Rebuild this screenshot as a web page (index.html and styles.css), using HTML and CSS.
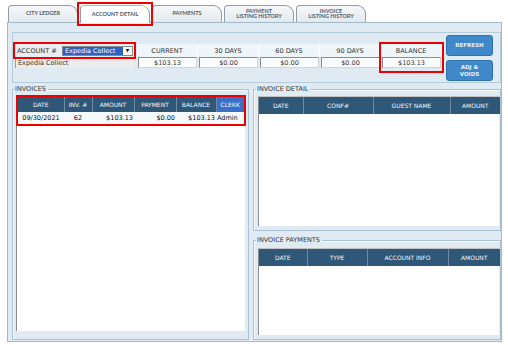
FILE: index.html
```html
<!DOCTYPE html>
<html lang="en">
<head>
    <title>City Ledger - Account Detail</title>
    <link rel="stylesheet" href="styles.css">
</head>
<body>
  <div class="app">
    <div class="tabs">
      <div class="tab">CITY LEDGER</div>
      <div class="tab-mark mark">
        <div class="tab tab-active">ACCOUNT DETAIL</div>
      </div>
      <div class="tab">PAYMENTS</div>
      <div class="tab">PAYMENT<br>LISTING HISTORY</div>
      <div class="tab">INVOICE<br>LISTING HISTORY</div>
    </div>

    <div class="panel">
      <div class="summary">
        <div class="account">
          <div class="account-row mark">
            <span class="account-label">ACCOUNT #</span>
            <div class="select">
              <span class="select-text">Expedia Collect</span>
              <span class="select-arrow">&#9660;</span>
            </div>
          </div>
          <div class="account-name">Expedia Collect</div>
        </div>

        <div class="aging">
          <div class="aging-col">
            <div class="aging-head">CURRENT</div>
            <div class="aging-val">$103.13</div>
          </div>
          <div class="aging-col">
            <div class="aging-head">30 DAYS</div>
            <div class="aging-val">$0.00</div>
          </div>
          <div class="aging-col">
            <div class="aging-head">60 DAYS</div>
            <div class="aging-val">$0.00</div>
          </div>
          <div class="aging-col">
            <div class="aging-head">90 DAYS</div>
            <div class="aging-val">$0.00</div>
          </div>
          <div class="aging-col mark">
            <div class="aging-head">BALANCE</div>
            <div class="aging-val">$103.13</div>
          </div>
        </div>

        <div class="actions">
          <button class="btn">REFRESH</button>
          <button class="btn">ADJ &amp;<br>VOIDS</button>
        </div>
      </div>

      <div class="lower">
        <fieldset class="group group-invoices">
          <legend>INVOICES</legend>
          <div class="grid-box grid-invoices">
            <table class="grid grid-left mark">
              <colgroup>
                <col style="width:46px"><col style="width:28px"><col style="width:42px">
                <col style="width:42px"><col style="width:40px"><col style="width:28px">
              </colgroup>
              <tr>
                <th>DATE</th>
                <th>INV. #</th>
                <th>AMOUNT</th>
                <th>PAYMENT</th>
                <th>BALANCE</th>
                <th class="th-active">CLERK</th>
              </tr>
              <tr>
                <td class="c">09/30/2021</td>
                <td class="c">62</td>
                <td class="r">$103.13</td>
                <td class="r">$0.00</td>
                <td class="r">$103.13</td>
                <td>Admin</td>
              </tr>
            </table>
          </div>
        </fieldset>

        <div class="right">
          <fieldset class="group group-detail">
            <legend>INVOICE DETAIL</legend>
            <div class="grid-box grid-detail">
              <table class="grid">
                <colgroup>
                  <col style="width:44px"><col style="width:70px"><col style="width:77px"><col style="width:50px">
                </colgroup>
                <tr>
                  <th>DATE</th>
                  <th>CONF#</th>
                  <th>GUEST NAME</th>
                  <th>AMOUNT</th>
                </tr>
              </table>
            </div>
          </fieldset>

          <fieldset class="group group-payments">
            <legend>INVOICE PAYMENTS</legend>
            <div class="grid-box grid-payments">
              <table class="grid">
                <colgroup>
                  <col style="width:48px"><col style="width:60px"><col style="width:81px"><col style="width:52px">
                </colgroup>
                <tr>
                  <th>DATE</th>
                  <th>TYPE</th>
                  <th>ACCOUNT INFO</th>
                  <th>AMOUNT</th>
                </tr>
              </table>
            </div>
          </fieldset>
        </div>
      </div>
    </div>
  </div>
</body>
</html>
```

FILE: styles.css
```css
body {
  margin: 0;
  background: #fff;
  font-family: "DejaVu Sans", Verdana, sans-serif;
  font-size: 6.5px;
  color: #222;
}

.app {
  width: 495px;
  margin-left: 7px;
  padding-top: 5px;
}

/* red annotation boxes */
.mark {
  outline: 2px solid #ee0000;
}

/* tabs */
.tabs {
  display: flex;
  gap: 2px;
  padding-left: 1px;
  height: 17px;
}

.tab {
  width: 70px;
  box-sizing: border-box;
  border: 1px solid #8e9ca8;
  border-bottom: none;
  border-radius: 4px 9px 0 0;
  background: linear-gradient(#f6f8fa, #e3e9ee);
  font-family: Lato, "DejaVu Sans", sans-serif;
  font-weight: 700;
  font-size: 5.5px;
  line-height: 5.5px;
  color: #505b65;
  display: flex;
  align-items: center;
  justify-content: center;
  text-align: center;
}

.tab-mark {
  height: 18px;
  position: relative;
  z-index: 1;
  outline-offset: 1px;
}

.tab-active {
  height: 18px;
  background: #fff;
  border-top: 1px solid #d8b760;
}

/* main panel */
.panel {
  box-sizing: border-box;
  height: 320px;
  border: 1px solid #a3bacb;
  background: #dfeaf2;
  padding: 9px 0 0 4px;
}

.summary {
  display: flex;
  box-sizing: border-box;
  height: 51px;
  width: 489px;
  border: 1px solid #b5ccdc;
  padding: 2px 0 0 2px;
}

.account {
  width: 119px;
  margin-top: 9px;
}

.account-row {
  display: flex;
  align-items: center;
  height: 13px;
  background: #e8eef2;
}

.account-label {
  width: 47px;
  padding-left: 2px;
  box-sizing: border-box;
  color: #333;
}

.select {
  display: flex;
  width: 71px;
  height: 10px;
  box-sizing: border-box;
  border: 1px solid #7f8a93;
  background: #2c63c1;
  color: #fff;
}

.select-text {
  flex: 1;
  padding-left: 2px;
  line-height: 8px;
}

.select-arrow {
  width: 9px;
  background: #fff;
  color: #111;
  font-size: 4.5px;
  display: flex;
  align-items: center;
  justify-content: center;
}

.account-name {
  margin-top: 1px;
  width: 118px;
  height: 10px;
  box-sizing: border-box;
  background: #ececec;
  border-top: 1px solid #9a9a9a;
  border-left: 1px solid #9a9a9a;
  padding-left: 2px;
  line-height: 9px;
  color: #333;
}

.aging {
  display: flex;
  margin-top: 9px;
  margin-left: 3px;
  height: 27px;
}

.aging-col {
  width: 61px;
  padding-bottom: 2px;
}

.aging-head {
  height: 13px;
  background: #eef6fa;
  border-right: 1px solid #fff;
  display: flex;
  align-items: center;
  justify-content: center;
  color: #333;
}

.aging-val {
  height: 11px;
  margin: 0 1px;
  box-sizing: border-box;
  background: #fbfdfe;
  border: 1px solid;
  border-color: #8c8c8c #d3d3d3 #d3d3d3 #8c8c8c;
  display: flex;
  align-items: center;
  justify-content: center;
  color: #333;
}

.actions {
  display: flex;
  flex-direction: column;
  gap: 4px;
  margin-left: 4px;
}

.btn {
  width: 47px;
  height: 21px;
  padding: 0;
  border: 1px solid #2f72ae;
  border-radius: 3px;
  background: #3f88c9;
  color: #e8f2fb;
  font-family: "DejaVu Sans", Verdana, sans-serif;
  font-size: 5.5px;
  font-weight: 700;
  line-height: 7px;
}

/* lower groups */
.lower {
  display: grid;
  grid-template-columns: 237px 248px;
  column-gap: 4px;
  margin-top: 2px;
}

.right {
  display: flex;
  flex-direction: column;
  gap: 5px;
}

.group {
  margin: 0;
  min-width: 0;
  box-sizing: border-box;
  border: 1px solid #a9c2d4;
  box-shadow: inset 1px 1px #f4f8fb;
}

.group legend {
  padding: 0 2px 0 1px;
  margin-left: -2px;
  font-size: 6.5px;
  line-height: 8px;
  color: #333;
}

.group-invoices {
  height: 255px;
  padding: 2px 3px 7px 3px;
}

.group-detail {
  height: 146px;
  padding: 3px 1px 3px 4px;
}

.group-payments {
  height: 104px;
  padding: 4px 1px 4px 4px;
}

.grid-box {
  background: #fff;
  box-sizing: border-box;
  border-left: 1px solid #8d8d8d;
  border-top: 1px solid #c2c2c2;
}

.grid-invoices {
  height: 236px;
  padding: 1px;
}

.grid-detail {
  height: 130px;
}

.grid-payments {
  height: 87px;
}

.grid {
  border-collapse: collapse;
  table-layout: fixed;
  width: 100%;
}

.grid-left {
  width: 226px;
}

.grid th {
  height: 17px;
  padding: 0;
  background: #2f5878;
  color: #f2f6fa;
  font-weight: normal;
  font-size: 6px;
  border-right: 1px solid #6f8ba3;
}

.grid-left th {
  height: 15px;
}

.grid th:last-child {
  border-right: none;
}

.grid .th-active {
  background: #3c70c7;
}

.grid td {
  height: 12px;
  padding: 0 1px;
  background: #f7fafc;
  color: #111;
  white-space: nowrap;
  overflow: hidden;
}

.grid td.c {
  text-align: center;
}

.grid td.r {
  text-align: right;
}
```
